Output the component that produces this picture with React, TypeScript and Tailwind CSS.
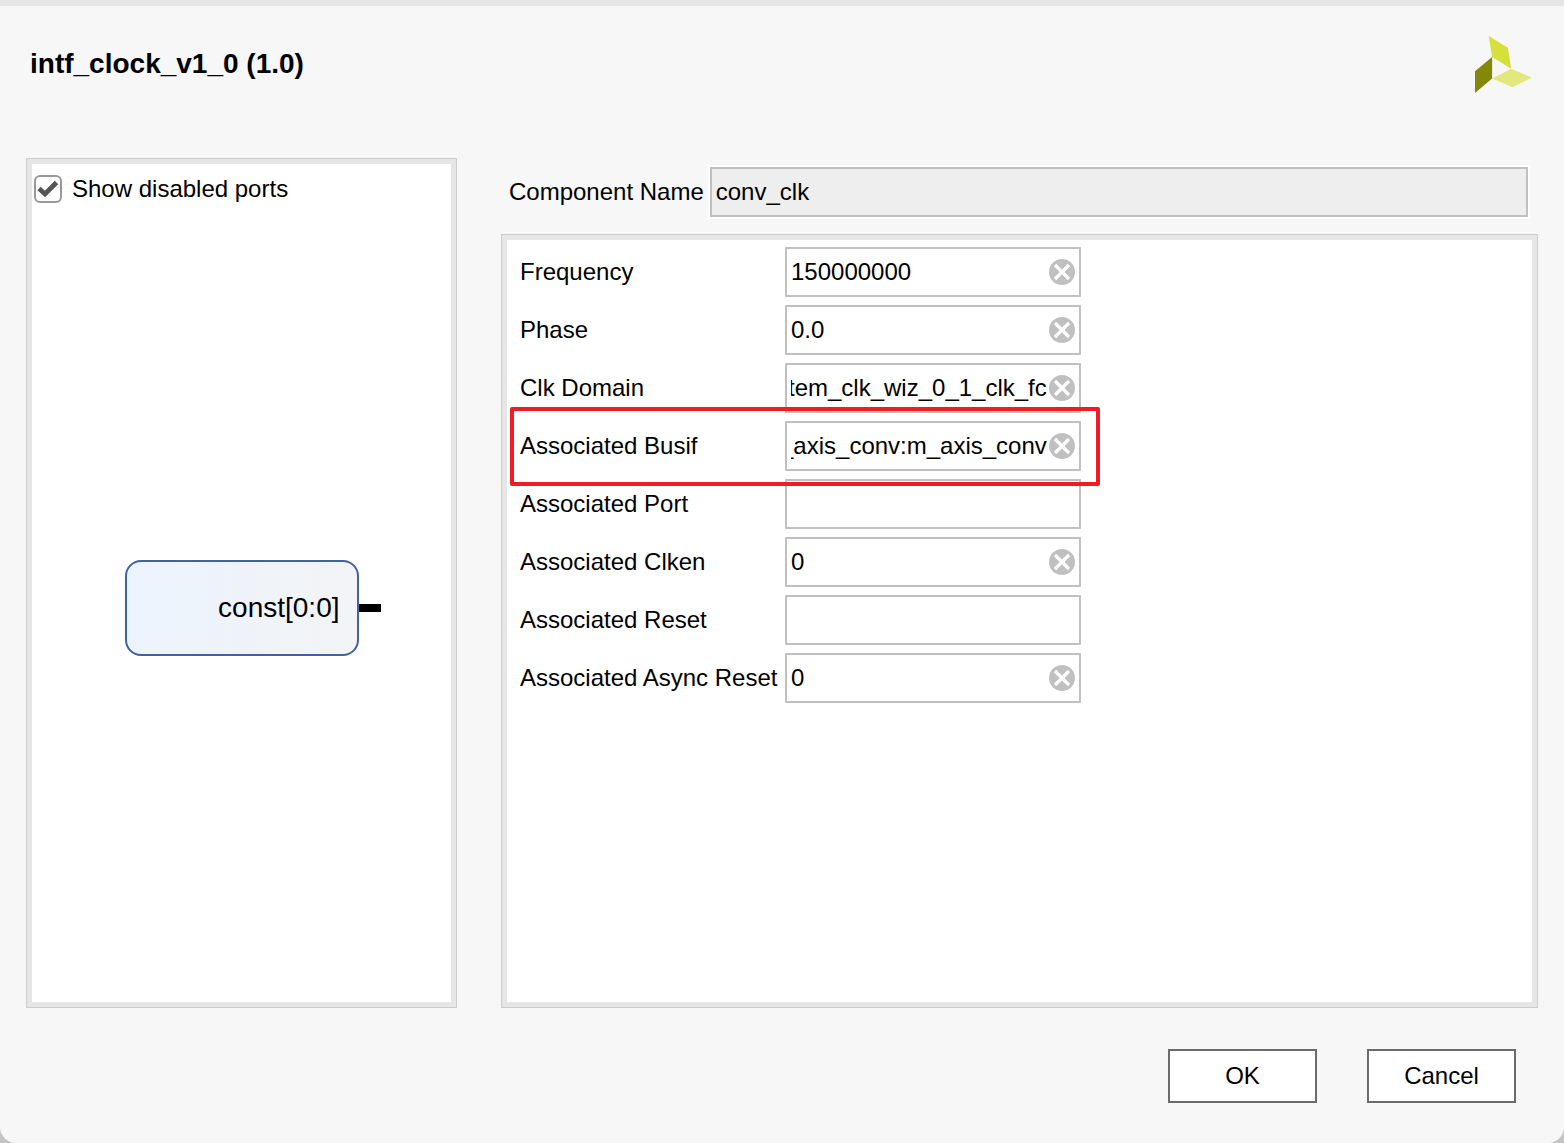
import React, { useEffect, useRef, useState } from "react";

type Param = {
  id: string;
  label: string;
  value: string;
  highlighted?: boolean;
};

const params: Param[] = [
  { id: "frequency", label: "Frequency", value: "150000000" },
  { id: "phase", label: "Phase", value: "0.0" },
  { id: "clk-domain", label: "Clk Domain", value: "tem_clk_wiz_0_1_clk_fc" },
  {
    id: "busif",
    label: "Associated Busif",
    value: "_axis_conv:m_axis_conv",
    highlighted: true,
  },
  { id: "port", label: "Associated Port", value: "" },
  { id: "clken", label: "Associated Clken", value: "0" },
  { id: "reset", label: "Associated Reset", value: "" },
  { id: "async-reset", label: "Associated Async Reset", value: "0" },
];

const Logo: React.FC = () => (
  <svg viewBox="45 48 170 170" className="size-[57px]" aria-hidden="true">
    <path d="M86 48 143 83 153 146 96 111Z" fill="#d5e03a" />
    <path d="M96 111V175L45 218V153Z" fill="#848708" />
    <path d="M153 146 215 172 157 201 96 175Z" fill="#e2e97c" />
  </svg>
);

const Panel: React.FC<{ className?: string; children: React.ReactNode }> = ({
  className = "",
  children,
}) => (
  <div className={`flex flex-col border border-[#cdcdcd] ${className}`}>
    <div className="flex flex-1 flex-col border-5 border-[#e6e6e6] bg-white">
      {children}
    </div>
  </div>
);

const ParamRow: React.FC<{ param: Param }> = ({ param }) => {
  const [value, setValue] = useState(param.value);
  const input = useRef<HTMLInputElement>(null);

  // long values show their end, as after typing
  useEffect(() => {
    if (input.current) input.current.scrollLeft = input.current.scrollWidth;
  }, []);

  return (
    <div className="relative flex w-fit items-center">
      <label htmlFor={param.id} className="w-[265px] whitespace-nowrap">
        {param.label}
      </label>
      <div className="flex h-[50px] w-[296px] items-center gap-0.5 rounded-[1px] border-2 border-[#c0c0c0] bg-white px-1">
        <input
          id={param.id}
          ref={input}
          type="text"
          value={value}
          onChange={(e) => setValue(e.target.value)}
          className="h-full min-w-0 flex-1 outline-none"
        />
        {value && (
          <button
            type="button"
            aria-label={`Clear ${param.label}`}
            onClick={() => setValue("")}
          >
            <svg viewBox="0 0 26 26" className="size-[26px]">
              <circle cx="13" cy="13" r="13" fill="#c0c0c0" />
              <path
                d="M6 6 20 20M20 6 6 20"
                stroke="#fff"
                strokeWidth="3.2"
                fill="none"
              />
            </svg>
          </button>
        )}
      </div>
      {param.highlighted && (
        <div className="pointer-events-none absolute -top-[14px] -right-[19px] -bottom-[15px] -left-[10px] z-10 rounded-xs border-4 border-[#ee1c25]" />
      )}
    </div>
  );
};

const App: React.FC = () => {
  const [showDisabled, setShowDisabled] = useState(true);

  return (
    <div className="min-h-screen bg-[#c4c4c4] font-['Liberation_Sans',Arial,sans-serif] text-2xl text-black">
      <div className="flex min-h-screen flex-col rounded-b-2xl border-t-6 border-[#e6e6e6] bg-[#f7f7f7]">
        <header className="flex h-[152px] items-start justify-between pt-[30px] pr-8 pl-[30px]">
          <h1 className="pt-2 text-[28px] leading-10 font-bold">
            intf_clock_v1_0 (1.0)
          </h1>
          <Logo />
        </header>

        <main className="flex flex-1 gap-11 px-[26px]">
          <Panel className="w-[431px] shrink-0">
            <label className="flex items-center gap-[10px] pt-[11px] pl-0.5 leading-7">
              <span className="relative size-7">
                <input
                  type="checkbox"
                  checked={showDisabled}
                  onChange={(e) => setShowDisabled(e.target.checked)}
                  className="block size-7 appearance-none rounded-md border-2 border-[#999999] bg-white"
                />
                {showDisabled && (
                  <svg
                    viewBox="0 0 28 28"
                    className="pointer-events-none absolute inset-0 size-7"
                  >
                    <path
                      d="M5 13.5 11 19 22.5 7.5"
                      stroke="#555"
                      strokeWidth="4.8"
                      fill="none"
                    />
                  </svg>
                )}
              </span>
              Show disabled ports
            </label>
            <div className="flex flex-1 items-center justify-center pt-[11px]">
              <div className="relative flex h-24 w-[234px] items-center justify-end rounded-2xl border-2 border-[#4062a0] bg-linear-to-r from-[#ebf4fe] via-[#eff3f9] to-[#f2f4f6] pr-[17px] text-[28px]">
                const[0:0]
                <span className="absolute left-full ml-0.5 h-2 w-[22px] bg-black" />
              </div>
            </div>
          </Panel>

          <div className="flex min-w-0 flex-1 flex-col">
            <div className="flex items-center gap-[6px] pt-[9px] pr-[10px] pb-[17px] pl-2">
              <label htmlFor="component-name" className="whitespace-nowrap">
                Component Name
              </label>
              <input
                id="component-name"
                type="text"
                readOnly
                value="conv_clk"
                className="h-[50px] min-w-0 flex-1 border-2 border-[#c0c0c0] bg-[#eeeeee] px-1 ring-2 ring-white outline-none"
              />
            </div>
            <Panel className="flex-1">
              <div className="flex flex-col gap-2 pt-[7px] pl-[13px]">
                {params.map((param) => (
                  <ParamRow key={param.id} param={param} />
                ))}
              </div>
            </Panel>
          </div>
        </main>

        <footer className="flex justify-end gap-[50px] pt-[41px] pr-12 pb-10">
          <button
            type="button"
            className="h-[54px] w-[149px] border-2 border-[#6b6b6b] bg-white"
          >
            OK
          </button>
          <button
            type="button"
            className="h-[54px] w-[149px] border-2 border-[#6b6b6b] bg-white"
          >
            Cancel
          </button>
        </footer>
      </div>
    </div>
  );
};

export default App;
